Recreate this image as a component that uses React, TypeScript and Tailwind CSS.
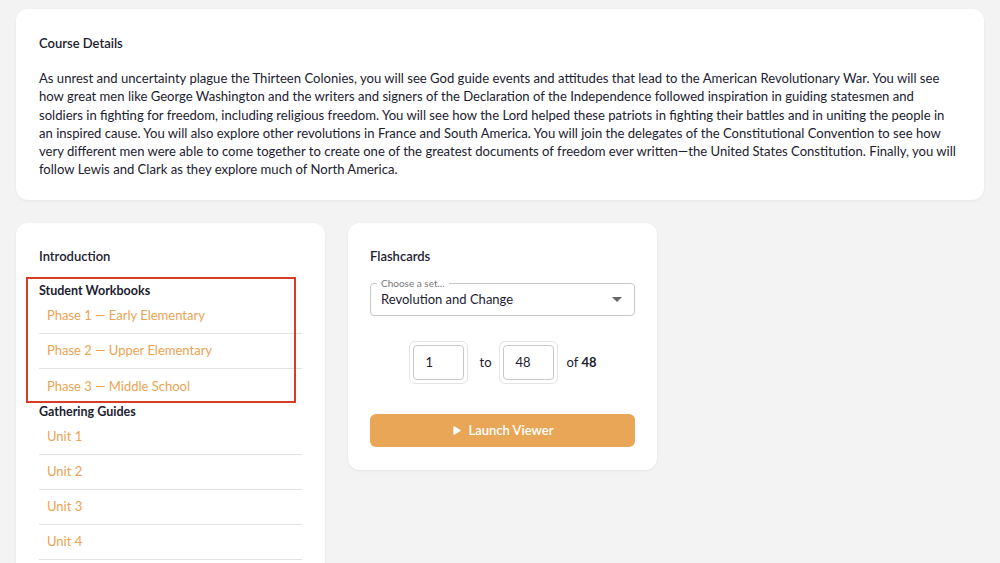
import { Play } from 'lucide-react';

const workbooks = [
  'Phase 1 — Early Elementary',
  'Phase 2 — Upper Elementary',
  'Phase 3 — Middle School',
];

const guides = ['Unit 1', 'Unit 2', 'Unit 3', 'Unit 4'];

// lines kept as in the original layout
const courseLines = [
  'As unrest and uncertainty plague the Thirteen Colonies, you will see God guide events and attitudes that lead to the American Revolutionary War. You will see',
  'how great men like George Washington and the writers and signers of the Declaration of the Independence followed inspiration in guiding statesmen and',
  'soldiers in fighting for freedom, including religious freedom. You will see how the Lord helped these patriots in fighting their battles and in uniting the people in',
  'an inspired cause. You will also explore other revolutions in France and South America. You will join the delegates of the Constitutional Convention to see how',
  'very different men were able to come together to create one of the greatest documents of freedom ever written—the United States Constitution. Finally, you will',
  'follow Lewis and Clark as they explore much of North America.',
];

const LinkList = ({ items, lastBorder = false }: { items: string[]; lastBorder?: boolean }) => (
  <ul className="flex flex-col">
    {items.map((item, i) => (
      <li
        key={item}
        className={`h-[35px] flex items-center pl-2 text-[13px] text-[#eba353] ${
          i < items.length - 1 || lastBorder ? 'border-b border-[#e3e3e3]' : ''
        }`}
      >
        {item}
      </li>
    ))}
  </ul>
);

const App = () => {
  return (
    <div
      className="h-[563px] overflow-hidden bg-[#f3f3f3] px-4 pt-[9px] text-[#1c2130]"
      style={{ fontFamily: 'Lato, "Noto Sans", sans-serif' }}
    >
      {/* Course details */}
      <section className="bg-white rounded-xl shadow-[0_1px_3px_rgba(0,0,0,0.06)] px-[23px] pt-[25px] pb-[21px]">
        <h2 className="text-[13px] font-semibold leading-[18px] mb-[17px]">Course Details</h2>
        <p className="text-[13.08px] leading-[18.3px]">
          {courseLines.map((line, i) => (
            <span key={i}>
              {line}
              {i < courseLines.length - 1 && <br />}
            </span>
          ))}
        </p>
      </section>

      <div className="flex items-start gap-[23px] mt-[23px]">
        {/* Introduction */}
        <section className="relative w-[309px] bg-white rounded-xl shadow-[0_1px_3px_rgba(0,0,0,0.06)] px-[23px] pt-[24px] pb-4">
          <h2 className="text-[13px] font-semibold leading-[18px] mb-[18px]">Introduction</h2>
          <h3 className="text-[12.5px] font-bold leading-[16px]">Student Workbooks</h3>
          <LinkList items={workbooks} />
          <h3 className="text-[12.5px] font-bold leading-[16px]">Gathering Guides</h3>
          <LinkList items={guides} lastBorder />
          <div className="absolute left-[10px] top-[54px] w-[270px] h-[126px] border-2 border-[#d63d27] pointer-events-none" />
        </section>

        {/* Flashcards */}
        <section className="w-[309px] bg-white rounded-xl shadow-[0_1px_3px_rgba(0,0,0,0.06)] px-[22px] pt-[24px] pb-[23px]">
          <h2 className="text-[13px] font-semibold leading-[18px] mb-[18px]">Flashcards</h2>
          <div className="relative h-[33px] border border-[#c9c9c9] rounded-[4px] flex items-center justify-between pl-[10px] pr-[12px]">
            <span className="absolute -top-[8px] left-[6px] bg-white px-[4px] text-[10px] leading-[14px] text-[#777]">
              Choose a set...
            </span>
            <span className="text-[13px] mt-[1px]">Revolution and Change</span>
            <span className="w-0 h-0 border-l-[5px] border-r-[5px] border-t-[5px] border-l-transparent border-r-transparent border-t-[#666]" />
          </div>

          <div className="flex items-center justify-center mt-[25px] text-[13px]">
            <div className="p-[3px] border border-[#e4e4e4] rounded-[6px]">
              <div className="w-[51px] h-[35px] border border-[#c9c9c9] rounded-[4px] flex items-center pl-[12px]">1</div>
            </div>
            <span className="ml-[12px]">to</span>
            <div className="ml-[7px] p-[3px] border border-[#e4e4e4] rounded-[6px]">
              <div className="w-[51px] h-[35px] border border-[#c9c9c9] rounded-[4px] flex items-center pl-[12px]">48</div>
            </div>
            <span className="ml-[9px]">
              of <span className="font-bold">48</span>
            </span>
          </div>

          <button className="mt-[30px] w-full h-[33px] rounded-[6px] bg-[#e9a656] text-white text-[13px] font-semibold flex items-center justify-center gap-[6px]">
            <Play className="w-[11px] h-[11px] fill-white" strokeWidth={0} />
            Launch Viewer
          </button>
        </section>
      </div>
    </div>
  );
};

export default App;
